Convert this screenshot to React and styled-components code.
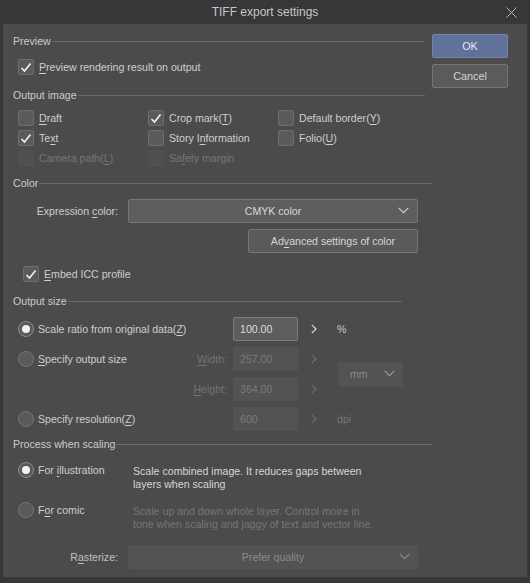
import React from 'react'
import styled, { createGlobalStyle, css } from 'styled-components'

const GlobalStyle = createGlobalStyle`
  html, body { margin: 0; padding: 0; background: #2f2f2f; }
  body { font-family: "Liberation Sans", Arial, sans-serif; font-size: 10.6px; color: #cecece; }
  * { box-sizing: border-box; }
`

const Window = styled.div`
  width: 530px;
  height: 583px;
  background: #373737;
  display: flex;
  flex-direction: column;
  padding: 0 3px 6px 3px;
`

const TitleBar = styled.div`
  height: 24px;
  flex-shrink: 0;
  display: flex;
  align-items: center;
  justify-content: center;
  position: relative;
  color: #c6c6c6;
  font-size: 12px;
`

const CloseBox = styled.div`
  position: absolute;
  right: 10px;
  top: 7px;
  width: 11px;
  height: 11px;
`

const Body = styled.div`
  flex: 1;
  overflow: hidden;
  background: #4b4b4b;
  padding: 7px 0 0 10px;
  display: flex;
  flex-direction: column;
`

const TopArea = styled.div`
  display: flex;
  gap: 7px;
`

const TopLeft = styled.div`
  width: 412px;
  display: flex;
  flex-direction: column;
`

const ButtonCol = styled.div`
  width: 76px;
  padding-top: 3px;
  display: flex;
  flex-direction: column;
  gap: 6px;
`

const DlgButton = styled.div`
  height: 24px;
  border-radius: 2px;
  display: flex;
  align-items: center;
  justify-content: center;
  font-size: 10.8px;
  color: ${p => (p.$primary ? '#e6e9f0' : '#d4d4d4')};
  background: ${p => (p.$primary ? '#60719a' : '#5b5b5b')};
  border: 1px solid ${p => (p.$primary ? '#7585aa' : '#767676')};
`

const Section = styled.div`
  width: ${p => p.$width || 419}px;
  height: 20px;
  display: flex;
  align-items: center;
  gap: 1px;
  margin-top: ${p => p.$top || 0}px;
  color: #cacaca;
`

const Rule = styled.div`
  flex: 1;
  height: 1px;
  background: #686868;
`

const Mn = styled.span`
  text-decoration: underline;
  text-underline-offset: 2px;
`

const CheckRow = styled.div`
  display: flex;
  align-items: center;
  gap: 5px;
  height: 20px;
  padding-left: ${p => p.$indent || 5}px;
  margin-top: ${p => p.$top || 0}px;
  color: ${p => (p.$disabled ? '#767676' : '#cecece')};
`

const Box = styled.div`
  width: 16px;
  height: 16px;
  border-radius: 2px;
  flex-shrink: 0;
  display: flex;
  align-items: center;
  justify-content: center;
  background: ${p => (p.$disabled ? '#4f4f4f' : '#5a5a5a')};
  border: 1px solid ${p => (p.$disabled ? '#525252' : '#6e6e6e')};
`

const OptionGrid = styled.div`
  display: grid;
  grid-template-columns: 130px 130px 130px;
  margin-top: 3px;
`

const Check = ({ on, disabled, children, indent, top }) => (
  <CheckRow $disabled={disabled} $indent={indent} $top={top}>
    <Box $disabled={disabled}>
      {on && (
        <svg width="12" height="11" viewBox="0 0 12 11">
          <path d="M1.5 6 L4.5 9 L10.5 1.5" fill="none" stroke="#f0f0f0" strokeWidth="1.7" />
        </svg>
      )}
    </Box>
    <span>{children}</span>
  </CheckRow>
)

const RadioCircle = styled.div`
  width: 16px;
  height: 16px;
  border-radius: 50%;
  flex-shrink: 0;
  display: flex;
  align-items: center;
  justify-content: center;
  background: #5a5a5a;
  border: 1px solid ${p => (p.$on ? '#8c8c8c' : '#747474')};
  &::after {
    content: '';
    width: 8px;
    height: 8px;
    border-radius: 50%;
    background: #f2f2f2;
    display: ${p => (p.$on ? 'block' : 'none')};
  }
`

const RadioLabel = styled.div`
  display: flex;
  align-items: center;
  gap: 4px;
  height: 24px;
  padding-left: 5px;
  white-space: nowrap;
`

const Radio = ({ on, children }) => (
  <RadioLabel>
    <RadioCircle $on={on} />
    <span>{children}</span>
  </RadioLabel>
)

const FieldRow = styled.div`
  display: flex;
  align-items: center;
  gap: 10px;
  margin-top: ${p => p.$top || 0}px;
`

const FieldLabel = styled.div`
  width: 105px;
  text-align: right;
  color: ${p => (p.$disabled ? '#c0c0c0' : '#cecece')};
`

const Select = styled.div`
  width: ${p => p.$width || 290}px;
  height: ${p => p.$height || 24}px;
  border-radius: 2px;
  display: flex;
  align-items: center;
  justify-content: center;
  position: relative;
  ${p =>
    p.$disabled
      ? css`
          background: #535353;
          color: #8a8a8a;
        `
      : css`
          background: #5e5e5e;
          border: 1px solid #767676;
          color: #d8d8d8;
        `}
`

const SelectArrow = styled.div`
  position: absolute;
  right: 8px;
  top: 50%;
  margin-top: -4px;
  height: 8px;
  display: flex;
`

const Down = ({ color }) => (
  <svg width="11" height="7" viewBox="0 0 11 7">
    <path d="M0.7 0.8 L5.5 5.6 L10.3 0.8" fill="none" stroke={color} strokeWidth="1.2" />
  </svg>
)

const Right = ({ color }) => (
  <svg width="6" height="10" viewBox="0 0 6 10">
    <path d="M0.8 0.8 L5 5 L0.8 9.2" fill="none" stroke={color} strokeWidth="1.2" />
  </svg>
)

const WideButton = styled.div`
  width: 170px;
  height: 24px;
  margin: 6px 0 0 235px;
  border-radius: 2px;
  background: #5a5a5a;
  border: 1px solid #767676;
  display: flex;
  align-items: center;
  justify-content: center;
  color: #d4d4d4;
`

const SizeGrid = styled.div`
  display: grid;
  grid-template-columns: 167px 53px 65px 35px auto;
  grid-auto-rows: 24px;
  row-gap: 6px;
  align-items: center;
  margin-top: 6px;
`

const SubLabel = styled.div`
  text-align: right;
  padding-right: 6px;
  color: #747474;
`

const NumBox = styled.div`
  height: 24px;
  border-radius: 2px;
  display: flex;
  align-items: center;
  padding-left: 7px;
  ${p =>
    p.$disabled
      ? css`
          background: #535353;
          color: #7a7a7a;
        `
      : css`
          background: #5d5d5d;
          border: 1px solid #7c7c7c;
          padding-left: 6px;
          color: #dcdcdc;
        `}
`

const Chev = styled.div`
  display: flex;
  justify-content: center;
  padding-right: 3px;
`

const Unit = styled.div`
  padding-left: 4px;
  color: ${p => (p.$disabled ? '#767676' : '#cacaca')};
`

const UnitSelect = styled(Select)`
  grid-column: 5;
  grid-row: 2 / span 2;
  justify-content: flex-start;
  padding-left: 12px;
  align-self: center;
  margin-left: 5px;
`

const ProcessGrid = styled.div`
  display: grid;
  grid-template-columns: 120px 260px;
  row-gap: 7px;
  margin-top: 4px;
  line-height: 13px;
`

const Desc = styled.div`
  padding-top: 7px;
  color: ${p => (p.$disabled ? '#767676' : '#d6d6d6')};
`

export default function App() {
  return (
    <>
      <GlobalStyle />
      <Window>
        <TitleBar>
          TIFF export settings
          <CloseBox>
            <svg width="11" height="11" viewBox="0 0 11 11">
              <path d="M0.5 0.5 L10.5 10.5 M10.5 0.5 L0.5 10.5" stroke="#b8b8b8" strokeWidth="1" />
            </svg>
          </CloseBox>
        </TitleBar>
        <Body>
          <TopArea>
            <TopLeft>
              <Section $width={412}>
                Preview<Rule />
              </Section>
              <Check on top={6}>
                <Mn>P</Mn>review rendering result on output
              </Check>
              <Section $width={412} $top={8}>
                Output image<Rule />
              </Section>
              <OptionGrid>
                <Check>
                  <Mn>D</Mn>raft
                </Check>
                <Check on>
                  Crop mark(<Mn>T</Mn>)
                </Check>
                <Check>
                  Default border(<Mn>Y</Mn>)
                </Check>
                <Check on>
                  Te<Mn>x</Mn>t
                </Check>
                <Check>
                  Story I<Mn>n</Mn>formation
                </Check>
                <Check>
                  Folio(<Mn>U</Mn>)
                </Check>
                <Check disabled>
                  Camera path(<Mn>L</Mn>)
                </Check>
                <Check disabled>
                  Sa<Mn>f</Mn>ety margin
                </Check>
              </OptionGrid>
            </TopLeft>
            <ButtonCol>
              <DlgButton $primary>OK</DlgButton>
              <DlgButton>Cancel</DlgButton>
            </ButtonCol>
          </TopArea>

          <Section $top={5}>
            Color<Rule />
          </Section>
          <FieldRow $top={6}>
            <FieldLabel>
              Expression <Mn>c</Mn>olor:
            </FieldLabel>
            <Select>
              CMYK color
              <SelectArrow>
                <Down color="#cfcfcf" />
              </SelectArrow>
            </Select>
          </FieldRow>
          <WideButton>
            Ad<Mn>v</Mn>anced settings of color
          </WideButton>
          <Check on indent={10} top={11}>
            <Mn>E</Mn>mbed ICC profile
          </Check>

          <Section $width={389} $top={7}>
            Output size<Rule />
          </Section>
          <SizeGrid>
            <Radio on>
              Scale ratio from original data(<Mn>Z</Mn>)
            </Radio>
            <div />
            <NumBox>100.00</NumBox>
            <Chev>
              <Right color="#d8d8d8" />
            </Chev>
            <Unit>%</Unit>

            <Radio>
              <Mn>S</Mn>pecify output size
            </Radio>
            <SubLabel>
              <Mn>W</Mn>idth:
            </SubLabel>
            <NumBox $disabled>257.00</NumBox>
            <Chev>
              <Right color="#6e6e6e" />
            </Chev>
            <UnitSelect $disabled $width={65} $height={25}>
              mm
              <SelectArrow>
                <Down color="#9a9a9a" />
              </SelectArrow>
            </UnitSelect>

            <div />
            <SubLabel>
              <Mn>H</Mn>eight:
            </SubLabel>
            <NumBox $disabled>364.00</NumBox>
            <Chev>
              <Right color="#6e6e6e" />
            </Chev>

            <Radio>
              Specify resolution(<Mn>Z</Mn>)
            </Radio>
            <div />
            <NumBox $disabled>600</NumBox>
            <Chev>
              <Right color="#6e6e6e" />
            </Chev>
            <Unit $disabled>dpi</Unit>
          </SizeGrid>

          <Section $top={3}>
            Process when scaling<Rule />
          </Section>
          <ProcessGrid>
            <Radio on>
              For <Mn>i</Mn>llustration
            </Radio>
            <Desc>
              Scale combined image. It reduces gaps between
              <br />
              layers when scaling
            </Desc>
            <Radio>
              F<Mn>o</Mn>r comic
            </Radio>
            <Desc $disabled>
              Scale up and down whole layer. Control moire in
              <br />
              tone when scaling and jaggy of text and vector line.
            </Desc>
          </ProcessGrid>
          <FieldRow $top={14}>
            <FieldLabel $disabled>
              R<Mn>a</Mn>sterize:
            </FieldLabel>
            <Select $disabled>
              Prefer quality
              <SelectArrow>
                <Down color="#8a8a8a" />
              </SelectArrow>
            </Select>
          </FieldRow>
        </Body>
      </Window>
    </>
  )
}
